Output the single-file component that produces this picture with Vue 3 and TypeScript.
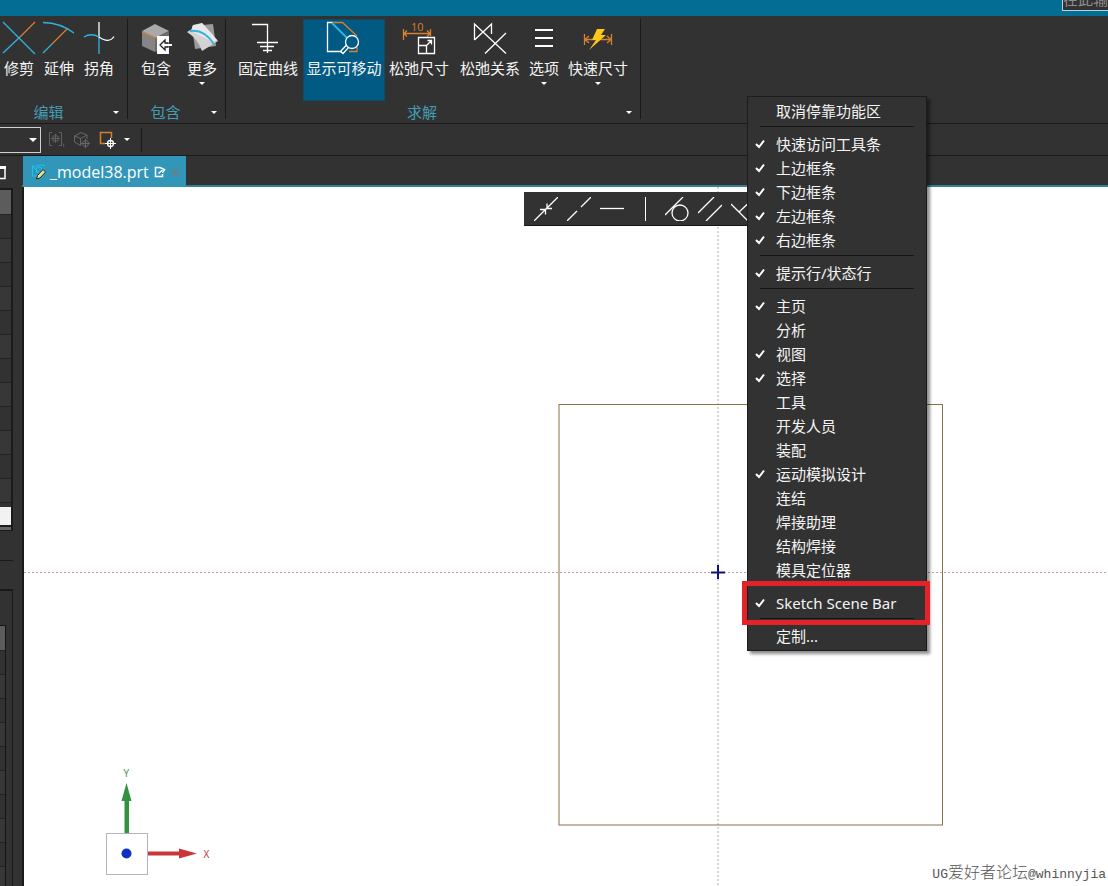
<script setup lang="ts">
import { ref } from 'vue'

interface Stroke {
  d: string
  c?: string
  w?: number
  fill?: string
}
interface Tool {
  label: string
  width: string
  icon: Stroke[]
  mark?: string
  menu?: boolean
  active?: boolean
}
interface Group {
  name: string
  key: string
  tools: Tool[]
}
interface Entry {
  label: string
  checked?: boolean
  boxed?: boolean
}

const blue = '#2fb4e0'
const orange = '#d9802e'

const groups: Group[] = [
  {
    name: '编辑',
    key: 'edit',
    tools: [
      {
        label: '修剪',
        width: 'w40',
        icon: [
          { d: 'M2 2 34 34M2 33 19 17', c: blue },
          { d: 'M19 17 34 2', c: orange },
        ],
      },
      {
        label: '延伸',
        width: 'w40',
        icon: [
          { d: 'M2 2.5Q20 3 33 13M2 33 11 24', c: blue },
          { d: 'M11 24 26 9', c: orange },
        ],
      },
      {
        label: '拐角',
        width: 'w40',
        icon: [
          { d: 'M18 2V18M18 17Q28 24 33 16.5' },
          { d: 'M18 18V34M3 17Q10 12.500 18 17', c: blue },
        ],
      },
    ],
  },
  {
    name: '包含',
    key: 'include',
    tools: [
      {
        label: '包含',
        width: 'w46',
        icon: [
          { d: 'M17 4 31 11 17 18 4 11Z', fill: '#a9a9a9', c: 'none' },
          { d: 'M4 11 17 18V32L4 26Z', fill: '#858585', c: 'none' },
          { d: 'M31 11 17 18V32L31 26Z', fill: '#6b6b6b', c: 'none' },
          { d: 'M4 12 19 18.5', c: orange },
          { d: 'M19 16H31V34H19Z', fill: '#fff', c: 'none' },
          { d: 'M27 20 22 25 27 30V27H30V23H27Z', c: '#222', fill: '#fff' },
          { d: 'M27 25H34', c: '#fff', w: 2 },
        ],
      },
      {
        label: '更多',
        width: 'w46',
        menu: true,
        icon: [
          { d: 'M8 6 29 4 32 26 11 29Z', fill: '#9c9c9c', c: 'none' },
          { d: 'M3 12 18 3 34 21 18 31Q14 19 3 12Z', fill: '#d3d3d3', c: 'none' },
          { d: 'M9 5 18 3 28 14 33 20 29 22 7 11Z', fill: '#e8e8e8', c: 'none' },
          { d: 'M6 11Q20 9 30 24', c: blue, w: 2 },
        ],
      },
    ],
  },
  {
    name: '求解',
    key: 'solve',
    tools: [
      {
        label: '固定曲线',
        width: 'w70',
        icon: [{ d: 'M2 4.500H17.500V33M7 22.500H28M10 26.500H24M13 30.500H22' }],
      },
      {
        label: '显示可移动',
        width: 'w82',
        active: true,
        icon: [
          { d: 'M7 2.500H1.500V31.500H16' },
          { d: 'M6 2.500H16.500L31 16M23 31.500H31V27', c: orange },
          { d: 'M6 3 21 18', c: blue, w: 2 },
          { d: 'M19.500 22A6.500 6.500 0 1 0 32.500 22A6.500 6.500 0 1 0 19.500 22M20 25.500 14.500 31.500 17 33.500 22.500 27.500' },
        ],
      },
      {
        label: '松弛尺寸',
        width: 'w68',
        mark: '10',
        icon: [
          { d: 'M2.500 9V20M29.500 9V16M2.500 13.500H29.500M6 10.500 3 13.500 6 16.500M26 10.500 29 13.500 26 16.500', c: orange },
          { d: 'M17.500 17.500H33.500V33.500H17.500ZM17.500 25.500H25.500V33.500M25.500 25.500 31 20M26.500 20.500H30.500V24.500' },
        ],
      },
      {
        label: '松弛关系',
        width: 'w74',
        icon: [{ d: 'M2.500 20V4L34 33.500M2.500 20 19.500 4V14M34 13 13 33.500' }],
      },
      { label: '选项', width: 'w34', menu: true, icon: [{ d: 'M9 10H27M9 18H27M9 26H27', w: 2 }] },
      {
        label: '快速尺寸',
        width: 'w74',
        menu: true,
        icon: [
          { d: 'M4.500 14V25M31.500 14V25M4.500 19.500H31.500M9 16 5 19.500 9 23M27 16 31 19.500 27 23', c: orange },
          { d: 'M17 9H25L21 15H26L9 30 16 20H12Z', fill: '#ffc61a', c: 'none' },
        ],
      },
    ],
  },
]

const constraints: { label: string; d: string }[] = [
  { label: '重合', d: 'M0 24 24 0M6 12.500H11.500V17.500M13 6.500V11.500H18' },
  { label: '共线', d: 'M0 24 10 14M14 10 24 0' },
  { label: '水平', d: 'M0 11.500H24' },
  { label: '相切', d: 'M0 18 18 0M7 16A8 8 0 1 0 23 16A8 8 0 1 0 7 16' },
  { label: '平行', d: 'M0 16 16 0M8 24 24 8' },
  { label: '垂直', d: 'M0 7 17 24M8 15 24 0' },
]

const sections = ref<Entry[][]>([
  [{ label: '取消停靠功能区' }],
  [
    { label: '快速访问工具条', checked: true },
    { label: '上边框条', checked: true },
    { label: '下边框条', checked: true },
    { label: '左边框条', checked: true },
    { label: '右边框条', checked: true },
  ],
  [{ label: '提示行/状态行', checked: true }],
  [
    { label: '主页', checked: true },
    { label: '分析' },
    { label: '视图', checked: true },
    { label: '选择', checked: true },
    { label: '工具' },
    { label: '开发人员' },
    { label: '装配' },
    { label: '运动模拟设计', checked: true },
    { label: '连结' },
    { label: '焊接助理' },
    { label: '结构焊接' },
    { label: '模具定位器' },
  ],
  [{ label: 'Sketch Scene Bar', checked: true, boxed: true }],
  [{ label: '定制...' }],
])

function toggle(entry: Entry) {
  entry.checked = !entry.checked
}
</script>

<template>
  <div class="app">
    <header class="titlebar">
      <input class="search" type="text" aria-label="查找命令" placeholder="在此输入" />
    </header>

    <nav class="ribbon" aria-label="功能区">
      <section v-for="g in groups" :key="g.key" class="group" :class="g.key">
        <div class="tools">
          <button v-for="t in g.tools" :key="t.label" type="button" class="tool" :class="[t.width, { active: t.active }]">
            <svg width="36" height="36" viewBox="0 0 36 36" aria-hidden="true">
              <path
                v-for="(s, i) in t.icon"
                :key="i"
                :d="s.d"
                :stroke="s.c ?? '#fff'"
                :stroke-width="s.w ?? 1.3"
                :fill="s.fill ?? 'none'"
              />
              <text v-if="t.mark" x="10" y="11" class="mark">{{ t.mark }}</text>
            </svg>
            <span class="caption">{{ t.label }}</span>
            <i v-if="t.menu" class="caret"></i>
          </button>
        </div>
        <div class="foot">
          <span class="group-name">{{ g.name }}</span>
          <button type="button" class="more" :aria-label="g.name + '选项'"><i class="caret"></i></button>
        </div>
      </section>
    </nav>

    <div class="filterbar">
      <div class="picker">
        <select aria-label="选择过滤器"><option></option></select>
        <i class="caret wide"></i>
      </div>
      <button type="button" class="small" aria-label="捕捉">
        <svg width="18" height="18" viewBox="0 0 18 18" fill="none" stroke="#606060">
          <path d="M4 1.500H1.500V14.500H4M11 1.500H13.500V14.500H11M7.500 3V12M3 7.500H12M5 5H10V10H5ZM15 12.500Q17 14 15 16" />
        </svg>
      </button>
      <button type="button" class="small" aria-label="实体">
        <svg width="18" height="18" viewBox="0 0 18 18" fill="none" stroke="#686868">
          <path d="M1.500 5 8 1.500 14 4 7.500 7.500ZM1.500 5V11L7.500 14.500V7.500M14 4V8" />
          <circle cx="12.500" cy="12.500" r="3" />
          <path d="M12.500 8V17M8 12.500H17" />
        </svg>
      </button>
      <button type="button" class="small" aria-label="点">
        <svg width="18" height="18" viewBox="0 0 18 18" fill="none" stroke="#fff">
          <path d="M7 12.500H2.500V1.500H13.500V7" stroke="#d9802e" stroke-width="1.500" />
          <circle cx="12.500" cy="12.500" r="3" stroke-width="1.300" />
          <path d="M12.500 7V18M7 12.500H18" />
        </svg>
      </button>
      <button type="button" class="drop" aria-label="更多过滤器"><i class="caret"></i></button>
      <span class="divider"></span>
    </div>

    <main class="body">
      <aside class="dock">
        <svg class="pin" width="6" height="14" viewBox="0 0 6 14" aria-hidden="true">
          <path d="M0 2H5V12.500H0" fill="none" stroke="#fff" stroke-width="1.500" />
          <path d="M0 1.500H6" stroke="#fff" stroke-width="3" />
        </svg>
        <div class="tree">
          <div class="tree-head"></div>
          <div v-for="n in 12" :key="n" class="row"></div>
          <div class="row short"></div>
          <input class="cell" type="text" aria-label="名称" />
          <div class="scroll"></div>
        </div>
        <div class="strip"></div>
        <div class="details">
          <div class="inner">
            <div class="tree-head"></div>
            <div v-for="n in 10" :key="n" class="row"></div>
          </div>
        </div>
      </aside>

      <div class="workspace">
        <div class="tabs">
          <a href="#" class="tab">
            <svg width="16" height="16" viewBox="0 0 16 16" fill="none" aria-hidden="true">
              <path d="M1.500 1V12H8M1 4Q6 0 14 1.500M1 2 12 12" stroke="#19c3ec" />
              <circle cx="8" cy="6" r="3" stroke="#19c3ec" />
              <path d="M5.500 15 6.500 11.500 12 5.500 14.500 8 9 14Z" fill="#e5e39a" stroke="#222" />
            </svg>
            <span class="file">_model38.prt</span>
            <svg width="12" height="12" viewBox="0 0 12 12" fill="none" stroke="#fff" stroke-width="1.500" aria-hidden="true">
              <path d="M6 1.500H1.500V10.500H8.500V8M4.500 7.500 8.500 4M6 1.500 10.500 3.500 8.500 7" />
            </svg>
            <svg class="close" width="8" height="8" viewBox="0 0 8 8" aria-hidden="true">
              <path d="M1 1 7 7M7 1 1 7" stroke="#697f88" stroke-width="2" />
            </svg>
          </a>
        </div>

        <div class="canvas">
          <svg class="scene" width="100%" height="100%" aria-label="草图">
            <line x1="0" y1="385.5" x2="100%" y2="385.5" stroke="#c29d9d" stroke-dasharray="2 2" />
            <line x1="694" y1="0" x2="694" y2="100%" stroke="#d3d9cf" stroke-width="2" stroke-dasharray="2 2" />
            <rect x="535" y="217.5" width="383.5" height="420.5" fill="none" stroke="#87734b" />
            <path d="M694 378V392M687 385.500H701" stroke="#10107c" stroke-width="2" />
            <rect x="82.5" y="646.5" width="41" height="41" fill="#fff" stroke="#b5b5b5" />
            <path d="M100.500 646V614H97.500L102.500 596 107.500 614H105V646Z" fill="#34913f" />
            <path d="M124 664.500H155V661.500L173 666.500 155 671.500V668.500H124Z" fill="#c9373a" />
            <circle cx="102.500" cy="666.500" r="5" fill="#1030c0" />
            <text x="99.500" y="590" class="axis-y">Y</text>
            <text x="179.500" y="671" class="axis-x">X</text>
          </svg>
          <div class="scenebar" role="toolbar" aria-label="Sketch Scene Bar">
            <template v-for="(c, i) in constraints" :key="c.label">
              <span v-if="i === 3" class="bar"></span>
              <button type="button" :aria-label="c.label">
                <svg width="24" height="24" viewBox="0 0 24 24" fill="none" stroke="#fff" stroke-width="1.300">
                  <path :d="c.d" />
                </svg>
              </button>
            </template>
          </div>
          <div class="credit">UG<span>爱好者论坛</span>@whinnyjia</div>
        </div>
      </div>
    </main>

    <div class="menu" role="menu">
      <div v-for="(s, i) in sections" :key="i" class="section" role="group">
        <button
          v-for="e in s"
          :key="e.label"
          type="button"
          class="entry"
          :class="{ boxed: e.boxed }"
          role="menuitemcheckbox"
          :aria-checked="!!e.checked"
          @click="toggle(e)"
        >
          <span class="tick">
            <svg v-if="e.checked" width="10" height="10" viewBox="0 0 10 10" aria-hidden="true">
              <path d="M1 5 4 8 9 1.500" fill="none" stroke="#fff" stroke-width="2" />
            </svg>
          </span>
          <span>{{ e.label }}</span>
        </button>
      </div>
    </div>
  </div>
</template>

<style>
body {
  margin: 0;
  background: #323232;
}
</style>

<style scoped>
.app {
  position: relative;
  display: flex;
  flex-direction: column;
  height: 100vh;
  overflow: hidden;
  background: #323232;
  color: #f4f4f4;
  font: 15px/20px "Open Sans", "Noto Sans CJK SC", sans-serif;
}
button,
input,
select {
  box-sizing: border-box;
  margin: 0;
  padding: 0;
  border: 0;
  border-radius: 0;
  background: none;
  color: inherit;
  font: inherit;
}
svg {
  display: block;
  flex: none;
}
.titlebar {
  flex: none;
  display: flex;
  align-items: flex-end;
  justify-content: flex-end;
  height: 16px;
  overflow: hidden;
  background: #036d94;
}
.search {
  flex: none;
  width: 46px;
  height: 24px;
  margin-bottom: 5px;
  border: 1px solid #b9d3dc;
  border-right: 0;
  background: #323232;
}
.search::placeholder {
  color: #8d8d8d;
  opacity: 1;
}
.ribbon {
  flex: none;
  display: flex;
  height: 107px;
  margin-left: -8px;
  border-bottom: 1px solid #191919;
}
.group {
  display: flex;
  flex-direction: column;
  margin: 3px 0 4px;
  border-right: 1px solid #191919;
}
.tools {
  display: flex;
  padding: 0 5px 0 7px;
}
.edit .tools {
  padding-right: 8px;
}
.include .tools {
  padding: 0 0 0 5px;
}
.tool {
  display: flex;
  flex-direction: column;
  align-items: center;
  height: 82px;
  padding-top: 1px;
  white-space: nowrap;
}
.tool.active {
  background: #005a83;
  box-shadow: inset 0 0 0 1px #104a64;
}
.w34 { width: 34px; }
.w40 { width: 40px; }
.w46 { width: 46px; }
.w68 { width: 68px; }
.w70 { width: 70px; }
.w74 { width: 74px; }
.w82 { width: 82px; }
.mark {
  fill: #d9802e;
  font: 11px/11px "Open Sans", sans-serif;
}
.caption {
  margin-top: 2px;
}
.caret {
  flex: none;
  width: 0;
  height: 0;
  border: 3px solid transparent;
  border-top-color: #fff;
  border-bottom: 0;
}
.tool .caret {
  margin-top: 4px;
}
.caret.wide {
  border-width: 4px 4px 0;
}
.foot {
  display: flex;
  align-items: center;
  height: 20px;
  margin-top: 1px;
}
.group-name {
  flex: 1;
  text-align: center;
  color: #459db5;
}
.more {
  display: flex;
  justify-content: center;
  width: 22px;
}
.filterbar {
  flex: none;
  display: flex;
  align-items: center;
  height: 31px;
  border-bottom: 1px solid #191919;
}
.picker {
  display: grid;
  align-items: center;
  width: 41px;
  margin-right: 7px;
}
.picker > * {
  grid-area: 1 / 1;
}
.picker select {
  width: 100%;
  height: 26px;
  appearance: none;
  border: 1px solid #d0d0d0;
  border-left: 0;
}
.picker .caret {
  justify-self: end;
  margin-right: 4px;
}
.small {
  width: 18px;
  height: 18px;
  margin-right: 7px;
}
.drop {
  display: flex;
  align-items: center;
  justify-content: center;
  width: 8px;
  height: 20px;
}
.divider {
  width: 1px;
  height: 24px;
  margin-left: 10px;
  background: #191919;
}
.body {
  flex: 1;
  display: flex;
  min-height: 0;
}
.dock {
  flex: none;
  display: flex;
  flex-direction: column;
  width: 22px;
  overflow: hidden;
}
.pin {
  margin: 10px 0 8px;
}
.tree {
  flex: none;
  width: 11px;
  border: 2px solid #1b1b1b;
  border-width: 2px 2px 1px 0;
}
.tree-head {
  height: 24px;
  background: #5c5c5c;
}
.row {
  box-sizing: border-box;
  height: 24px;
  border-top: 1px solid #232323;
}
.row:nth-child(odd) {
  background: #373737;
}
.row.short {
  height: 5px;
}
.cell {
  display: block;
  width: 11px;
  height: 18px;
  background: #f2f2f2;
}
.scroll {
  height: 3px;
  border-top: 2px solid #1b1b1b;
  background: #666;
}
.strip {
  flex: none;
  width: 13px;
  height: 29px;
  border-bottom: 1px solid #191919;
}
.details {
  flex: 1;
  width: 12px;
  margin-top: 28px;
  padding-top: 34px;
  border: 2px solid #191919;
  border-width: 2px 1px 0 0;
}
.inner {
  width: 5px;
  border: 1px solid #151515;
  border-left: 0;
}
.workspace {
  flex: 1;
  display: flex;
  flex-direction: column;
  min-width: 0;
}
.tabs {
  flex: none;
  display: flex;
  height: 31px;
  padding-left: 1px;
  box-shadow: inset 0 -2px #347f98;
}
.tab {
  display: flex;
  align-items: center;
  padding: 0 7px 0 8px;
  background: #3296b8;
  color: #fff;
  font-size: 16px;
  text-decoration: none;
}
.file {
  margin: 0 5px 0 3px;
}
.close {
  margin-left: 5px;
}
.canvas {
  position: relative;
  flex: 1;
  min-height: 0;
  overflow: hidden;
  border-left: 2px solid #1b1b1b;
  background: #fff;
}
.scene {
  position: absolute;
  inset: 0;
}
.axis-x,
.axis-y {
  font: 10px/10px "Open Sans", sans-serif;
}
.axis-x {
  fill: #b62f33;
}
.axis-y {
  fill: #34913f;
}
.scenebar {
  position: absolute;
  top: 5px;
  left: 500px;
  display: flex;
  align-items: center;
  gap: 9px;
  height: 33px;
  padding: 0 10px;
  border-bottom: 1px solid #151515;
  background: #323232;
}
.bar {
  width: 1px;
  height: 24px;
  margin: 0 10px 0 12px;
  background: #fff;
}
.credit {
  position: absolute;
  right: 2px;
  bottom: 1px;
  color: #555;
  font: 13px/20px "Liberation Mono", "Noto Sans CJK SC", monospace;
}
.credit span {
  font-size: 16px;
  font-weight: 300;
}
.menu {
  position: absolute;
  top: 96px;
  left: 747px;
  box-sizing: border-box;
  width: 180px;
  padding: 2px 0;
  border: 1px solid #1c1c1c;
  background: #323232;
  box-shadow: 3px 3px 3px rgba(0, 0, 0, 0.45);
  font-family: "Noto Sans", "Noto Sans CJK SC", sans-serif;
}
.section + .section {
  padding-top: 9px;
  background: linear-gradient(#151515, #151515) 12px 3px / 154px 1px no-repeat;
}
.entry {
  position: relative;
  display: flex;
  align-items: center;
  width: 100%;
  height: 24px;
  text-align: left;
}
.tick {
  width: 21px;
  padding-left: 7px;
}
/* Call-out frame around the highlighted entry */
.entry.boxed::after {
  content: "";
  position: absolute;
  inset: -10px -4px -10px -6px;
  border: 5px solid #e3222a;
}
</style>
